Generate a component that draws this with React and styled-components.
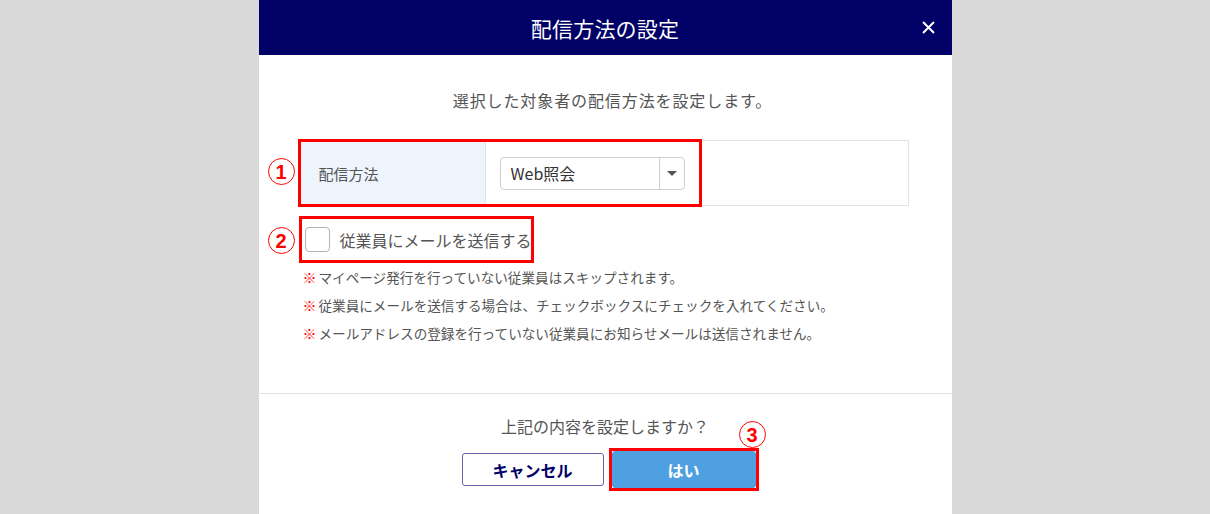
import React from "react";
import { styled, createGlobalStyle } from "styled-components";

const GlobalStyle = createGlobalStyle`
  html, body {
    margin: 0;
    padding: 0;
    background: #d9d9d9;
    font-family: "Noto Sans CJK JP", "Noto Sans", sans-serif;
    overflow: hidden;
  }
`;

const notes = [
  "マイページ発行を行っていない従業員はスキップされます。",
  "従業員にメールを送信する場合は、チェックボックスにチェックを入れてください。",
  "メールアドレスの登録を行っていない従業員にお知らせメールは送信されません。",
];

export default function App() {
  return (
    <Backdrop>
      <GlobalStyle />
      <Dialog>
        <Header>
          <span />
          <h1>配信方法の設定</h1>
          <CloseButton aria-label="閉じる">
            <svg width="13" height="13" viewBox="0 0 13 13">
              <path d="M1 1L12 12M12 1L1 12" stroke="#fff" strokeWidth="2" />
            </svg>
          </CloseButton>
        </Header>
        <Body>
          <Lead>選択した対象者の配信方法を設定します。</Lead>
          <Annotated>
            <FormTable>
              <LabelCell>配信方法</LabelCell>
              <ValueCell>
                <Select>
                  <span>Web照会</span>
                  <Caret />
                </Select>
              </ValueCell>
            </FormTable>
            <Marker $left={-1} $top={-1} $width={404} $height={68} />
            <Badge $left={-31} $top={18}>1</Badge>
          </Annotated>
          <Annotated $mt={10}>
            <CheckRow>
              <CheckBox />
              <span>従業員にメールを送信する</span>
            </CheckRow>
            <Marker $left={0} $top={0} $width={235} $height={47} />
            <Badge $left={-31} $top={11}>2</Badge>
          </Annotated>
          <Notes>
            {notes.map((n) => (
              <li key={n}>
                <b>※</b>
                {n}
              </li>
            ))}
          </Notes>
        </Body>
        <Footer>
          <p>上記の内容を設定しますか？</p>
          <Buttons>
            <Button $variant="outline">キャンセル</Button>
            <Annotated>
              <Button $variant="primary">はい</Button>
              <Marker $left={-3} $top={-3} $width={150} $height={43} />
              <Badge $left={127} $top={-30}>3</Badge>
            </Annotated>
          </Buttons>
        </Footer>
      </Dialog>
    </Backdrop>
  );
}

const Backdrop = styled.div`
  min-height: 100vh;
  display: flex;
  justify-content: center;
`;

const Dialog = styled.div`
  width: 693px;
  background: #fff;
  display: flex;
  flex-direction: column;
`;

const Header = styled.div`
  height: 55px;
  background: #000066;
  display: grid;
  grid-template-columns: 60px 1fr 60px;
  align-items: center;
  h1 {
    margin: 0;
    text-align: center;
    color: #fff;
    font-size: 21px;
    font-weight: 400;
    letter-spacing: 0.2px;
  }
`;

const CloseButton = styled.button`
  justify-self: end;
  margin-right: 17px;
  background: transparent;
  border: 0;
  padding: 0;
  width: 13px;
  height: 13px;
  display: flex;
  cursor: pointer;
`;

const Body = styled.div`
  padding: 33px 43px 40px 40px;
  height: 339px;
  box-sizing: border-box;
  border-bottom: 1px solid #e3e3e3;
  display: flex;
  flex-direction: column;
  align-items: flex-start;
`;

const Lead = styled.p`
  margin: 0 0 28px;
  padding-left: 18px;
  align-self: stretch;
  text-align: center;
  color: #555;
  font-size: 16px;
  line-height: 24px;
  letter-spacing: 0.9px;
`;

const Annotated = styled.div`
  position: relative;
  align-self: stretch;
  margin-top: ${(p) => p.$mt || 0}px;
`;

const Marker = styled.div`
  position: absolute;
  left: ${(p) => p.$left}px;
  top: ${(p) => p.$top}px;
  width: ${(p) => p.$width}px;
  height: ${(p) => p.$height}px;
  border: 3px solid #ff0000;
  box-sizing: border-box;
  pointer-events: none;
`;

const Badge = styled.span`
  position: absolute;
  left: ${(p) => p.$left}px;
  top: ${(p) => p.$top}px;
  width: 27px;
  height: 27px;
  border: 1px solid #ff0000;
  border-radius: 50%;
  box-sizing: border-box;
  display: flex;
  align-items: center;
  justify-content: center;
  color: #ff0000;
  font-family: "Liberation Sans", Arial, sans-serif;
  font-weight: 700;
  font-size: 20px;
  line-height: 1;
  background: #fff;
`;

const FormTable = styled.div`
  display: grid;
  grid-template-columns: 186px 1fr;
  height: 66px;
  border: 1px solid #e3e3e3;
  box-sizing: border-box;
`;

const LabelCell = styled.div`
  background: #edf4fc;
  border-right: 1px solid #e3e3e3;
  display: flex;
  align-items: center;
  padding-left: 19px;
  color: #555;
  font-size: 15px;
`;

const ValueCell = styled.div`
  display: flex;
  align-items: center;
  padding-left: 14px;
`;

const Select = styled.div`
  width: 185px;
  height: 33px;
  box-sizing: border-box;
  border: 1px solid #cfcfcf;
  border-radius: 4px;
  display: grid;
  grid-template-columns: 1fr 25px;
  align-items: center;
  span {
    padding-left: 10px;
    color: #333;
    font-size: 16px;
  }
`;

const Caret = styled.i`
  height: 100%;
  border-left: 1px solid #cfcfcf;
  display: flex;
  align-items: center;
  justify-content: center;
  &::before {
    content: "";
    border-left: 5px solid transparent;
    border-right: 5px solid transparent;
    border-top: 5px solid #555;
  }
`;

const CheckRow = styled.label`
  height: 47px;
  display: flex;
  align-items: center;
  gap: 10px;
  padding-left: 6px;
  color: #555;
  font-size: 16px;
`;

const CheckBox = styled.span`
  width: 25px;
  height: 25px;
  box-sizing: border-box;
  border: 1.5px solid #b3b3b3;
  border-radius: 4px;
  background: #fff;
`;

const Notes = styled.ul`
  list-style: none;
  margin: 0;
  padding: 0 0 0 4px;
  li {
    font-size: 13.6px;
    line-height: 28px;
    color: #555;
    white-space: nowrap;
  }
  b {
    color: #ff0000;
    font-weight: 700;
    font-size: 14px;
    margin-right: 2px;
  }
`;

const Footer = styled.div`
  display: flex;
  flex-direction: column;
  align-items: center;
  padding-top: 20px;
  p {
    margin: 0;
    color: #555;
    font-size: 16px;
    line-height: 24px;
  }
`;

const Buttons = styled.div`
  display: flex;
  gap: 8px;
  margin-top: 13px;
  margin-left: 7px;
  align-items: center;
`;

const Button = styled.button`
  width: 144px;
  height: 37px;
  box-sizing: border-box;
  border-radius: 3px;
  font-family: "Noto Sans CJK JP", sans-serif;
  font-weight: 700;
  font-size: 16px;
  cursor: pointer;
  display: block;
  border: 1px solid ${(p) => (p.$variant === "primary" ? "#4d9fdf" : "#6464a8")};
  background: ${(p) => (p.$variant === "primary" ? "#4fa0e0" : "#fff")};
  color: ${(p) => (p.$variant === "primary" ? "#fff" : "#000066")};
  ${(p) => p.$variant === "outline" && "width: 142px; height: 33px;"}
`;
